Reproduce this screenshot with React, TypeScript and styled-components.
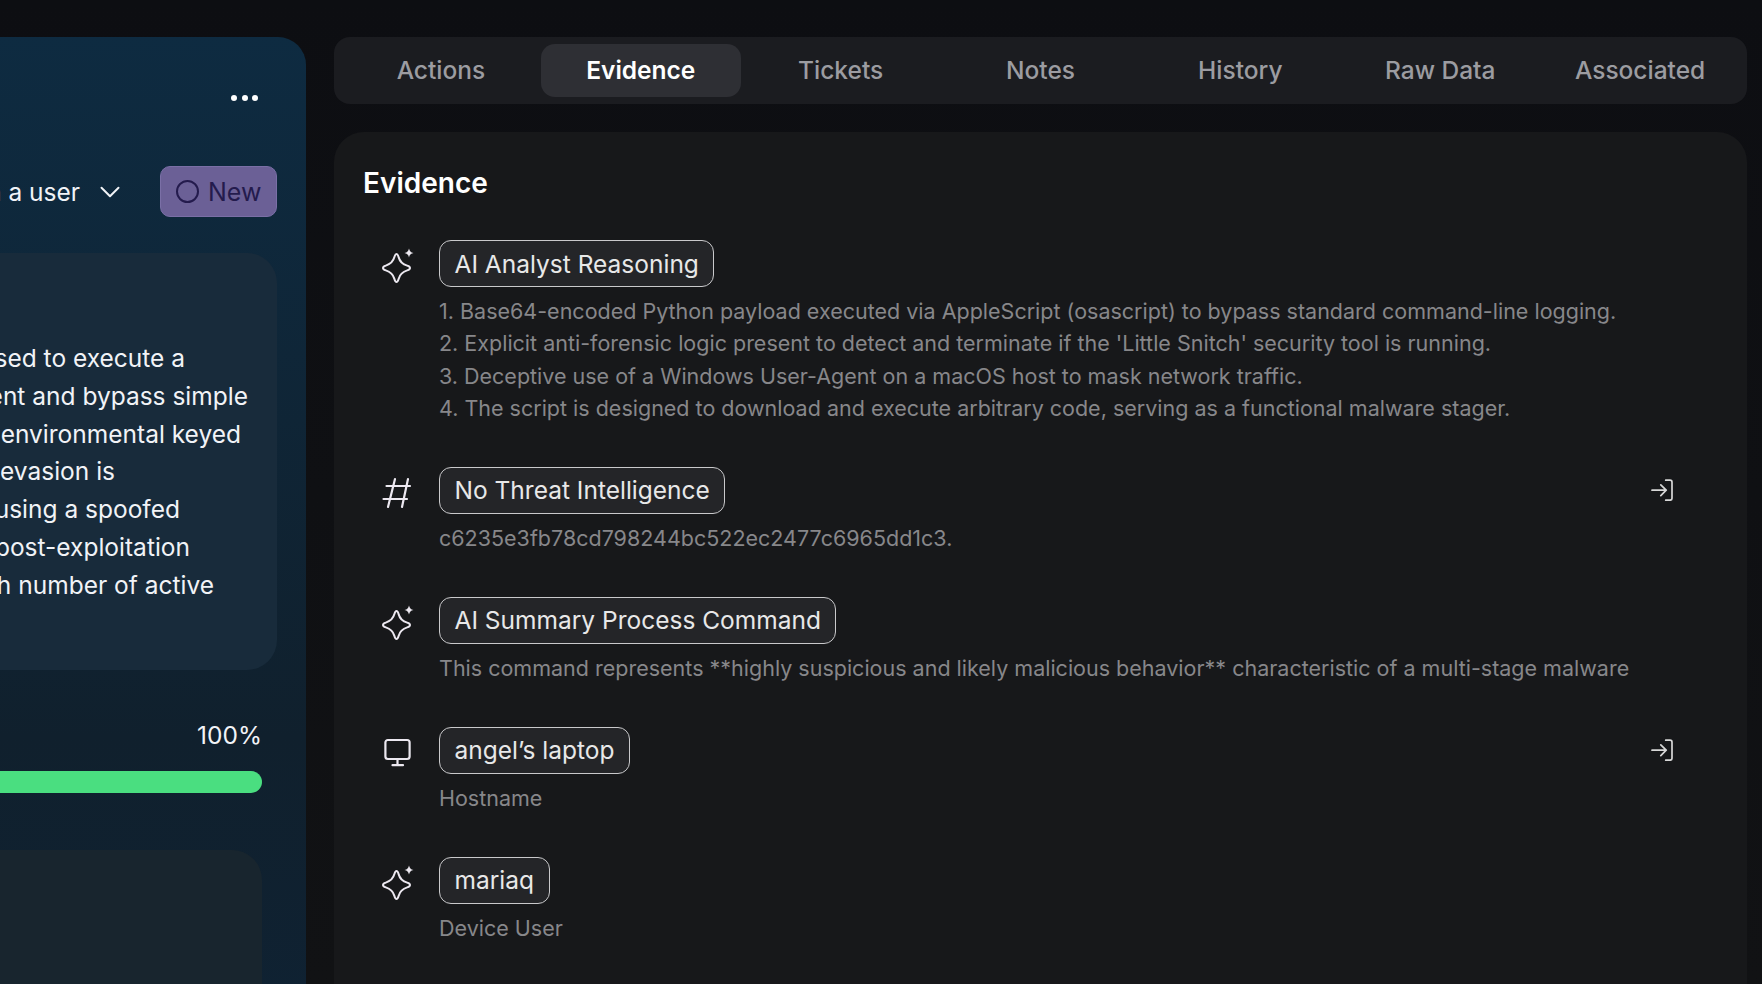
import styled, { createGlobalStyle } from "styled-components";
import { ChevronDown } from "lucide-react";

const GlobalStyle = createGlobalStyle`
  html, body {
    margin: 0;
    height: 984px;
    overflow: hidden;
    background: linear-gradient(180deg, #0d0e12 0%, #111214 100%);
    font-family: Inter, "Liberation Sans", sans-serif;
  }
`;

const summaryLines = [
  { text: "A base64 payload was used to execute a", end: 185 },
  { text: "in memory and avoid content and bypass simple", end: 248 },
  { text: "checks, along with environmental keyed", end: 241 },
  { text: "logic for defense evasion is", end: 115 },
  { text: "the stager beacons using a spoofed", end: 180 },
  { text: "agent to fetch the post-exploitation", end: 190 },
  { text: "across a high number of active", end: 214 },
];

const tabs = ["Actions", "Evidence", "Tickets", "Notes", "History", "Raw Data", "Associated"];

function SparkleIcon() {
  return (
    <Glyph viewBox="0 0 36 36" fill="none" stroke="currentColor" strokeWidth="2" strokeLinejoin="round">
      <path d="M16.5 6c1.200 0 1.600 1.400 2.100 3.100 1.300 4.800 3.500 7 8.600 8.500 1.700.5 2.800 1.200 2.800 2.400s-1.100 1.900-2.800 2.400c-5.100 1.500-7.300 3.700-8.600 8.500-.5 1.700-.9 3.100-2.100 3.100s-1.600-1.400-2.100-3.100c-1.300-4.800-3.500-7-8.600-8.500C4.100 21.900 3 21.200 3 20s1.100-1.900 2.800-2.400c5.100-1.500 7.300-3.700 8.600-8.500.5-1.700.9-3.100 2.100-3.100z" />
      <path
        d="M29 .5c.7 2.800 1.700 3.800 4.500 4.500-2.800.7-3.800 1.700-4.500 4.500-.7-2.800-1.700-3.800-4.500-4.500 2.800-.7 3.800-1.700 4.500-4.500z"
        fill="currentColor"
        stroke="none"
      />
    </Glyph>
  );
}

function HashIcon() {
  return (
    <Glyph viewBox="0 0 36 36" fill="none" stroke="currentColor" strokeWidth="2.200" strokeLinecap="round">
      <path d="M6.500 11h23.500M3.500 24H27M15 4 8 32M28 4 22 32" />
    </Glyph>
  );
}

function MonitorIcon() {
  return (
    <Glyph viewBox="0 0 36 36" fill="none" stroke="currentColor" strokeWidth="2.200" strokeLinecap="round">
      <rect x="5.400" y="5" width="24.200" height="19" rx="2.500" />
      <path d="M17.500 24v6M12.500 30.200h10.500" />
    </Glyph>
  );
}

function JumpIcon() {
  return (
    <JumpGlyph viewBox="0 0 22 22" fill="none" stroke="currentColor" strokeWidth="1.700" strokeLinecap="round" strokeLinejoin="round">
      <path d="M1 11.200h14M9.800 5.800l5.400 5.400-5.400 5.400M14.700 1.200H19a2 2 0 0 1 2 2v16a2 2 0 0 1-2 2h-4.300" />
    </JumpGlyph>
  );
}

function EvidenceRow({ icon, label, children, jump }: { icon: React.ReactNode; label: string; children: React.ReactNode; jump?: boolean }) {
  return (
    <Row>
      <IconSlot>{icon}</IconSlot>
      <RowBody>
        <ChipLine>
          <Chip>{label}</Chip>
          {jump && <JumpIcon />}
        </ChipLine>
        <Detail>{children}</Detail>
      </RowBody>
    </Row>
  );
}

export default function App() {
  return (
    <>
      <GlobalStyle />
      <Page>
        <AlertPanel>
          <MoreDots>
            <i />
            <i />
            <i />
          </MoreDots>
          <StatusRow>
            <Assign>
              <AssignLabel>Assign a user</AssignLabel>
              <ChevronDown size={34} strokeWidth={1.4} />
            </Assign>
            <StatusChip>
              <StatusRing />
              New
            </StatusChip>
          </StatusRow>
          <SummaryCard>
            {summaryLines.map((line) => (
              <SummaryLine key={line.end} $end={line.end}>
                <span>{line.text}</span>
              </SummaryLine>
            ))}
          </SummaryCard>
          <Confidence>
            <ConfidenceValue>100%</ConfidenceValue>
            <ConfidenceBar />
          </Confidence>
          <LowerCard />
        </AlertPanel>
        <Main>
          <TabBar>
            {tabs.map((tab) => (
              <Tab key={tab} $active={tab === "Evidence"}>
                {tab}
              </Tab>
            ))}
          </TabBar>
          <EvidencePanel>
            <Title>Evidence</Title>
            <Rows>
              <EvidenceRow icon={<SparkleIcon />} label="AI Analyst Reasoning">
                1. Base64-encoded Python payload executed via AppleScript (osascript) to bypass standard command-line logging.
                <br />
                2. Explicit anti-forensic logic present to detect and terminate if the 'Little Snitch' security tool is running.
                <br />
                3. Deceptive use of a Windows User-Agent on a macOS host to mask network traffic.
                <br />
                4. The script is designed to download and execute arbitrary code, serving as a functional malware stager.
              </EvidenceRow>
              <EvidenceRow icon={<HashIcon />} label="No Threat Intelligence" jump>
                c6235e3fb78cd798244bc522ec2477c6965dd1c3.
              </EvidenceRow>
              <EvidenceRow icon={<SparkleIcon />} label="AI Summary Process Command">
                This command represents **highly suspicious and likely malicious behavior** characteristic of a multi-stage malware
              </EvidenceRow>
              <EvidenceRow icon={<MonitorIcon />} label="angel’s laptop" jump>
                Hostname
              </EvidenceRow>
              <EvidenceRow icon={<SparkleIcon />} label="mariaq">
                Device User
              </EvidenceRow>
            </Rows>
          </EvidencePanel>
        </Main>
      </Page>
    </>
  );
}

const Page = styled.div`
  display: flex;
  gap: 28px;
  height: 984px;
  padding: 37px 15px 0 0;
  box-sizing: border-box;
  overflow: hidden;
`;

const AlertPanel = styled.aside`
  flex: 0 0 306px;
  display: flex;
  flex-direction: column;
  align-items: flex-end;
  height: 1000px;
  padding: 58px 29px 0 0;
  box-sizing: border-box;
  overflow: hidden;
  border-radius: 0 28px 0 0;
  background: linear-gradient(180deg, #0e2b41 0%, #10202d 70%, #0f2233 100%);
  color: #f1f3f7;
`;

const MoreDots = styled.div`
  flex: none;
  display: flex;
  gap: 4.500px;
  margin-right: 19px;

  i {
    width: 6px;
    height: 6px;
    border-radius: 50%;
    background: #ffffff;
  }
`;

const StatusRow = styled.div`
  flex: none;
  display: flex;
  align-items: center;
  margin-top: 65px;
`;

const Assign = styled.div`
  display: flex;
  align-items: center;
  gap: 12.500px;
  margin-right: 33.500px;
  white-space: nowrap;

  svg {
    flex: none;
  }
`;

const AssignLabel = styled.span`
  font-size: 24.500px;
`;

const StatusChip = styled.div`
  display: flex;
  align-items: center;
  gap: 9px;
  width: 117px;
  height: 51px;
  padding-left: 15px;
  box-sizing: border-box;
  border: 1px solid #7a6fa6;
  border-radius: 10px;
  background: #6b6096;
  color: #241b4d;
  font-size: 25px;
`;

const StatusRing = styled.span`
  width: 23px;
  height: 23px;
  box-sizing: border-box;
  border: 2px solid #241b4d;
  border-radius: 50%;
`;

const SummaryCard = styled.section`
  flex: none;
  align-self: stretch;
  display: flex;
  flex-direction: column;
  height: 417px;
  margin: 36px 0 0 -40px;
  padding: 87px 0 0 40px;
  box-sizing: border-box;
  border-radius: 30px;
  background: #182b3b;
  font-size: 24.500px;
  line-height: 37.800px;
`;

const SummaryLine = styled.div<{ $end: number }>`
  display: flex;
  justify-content: flex-end;
  width: ${({ $end }) => $end}px;
  white-space: nowrap;
`;

const Confidence = styled.div`
  flex: none;
  align-self: stretch;
  display: flex;
  flex-direction: column;
  align-items: flex-end;
  margin: 48px 15px 0 0;
`;

const ConfidenceValue = styled.span`
  font-size: 24.500px;
  line-height: 34px;
`;

const ConfidenceBar = styled.div`
  align-self: stretch;
  height: 22px;
  margin-top: 19px;
  margin-left: -40px;
  border-radius: 11px;
  background: #4ade80;
`;

const LowerCard = styled.section`
  flex: none;
  align-self: stretch;
  height: 300px;
  margin: 57px 15px 0 -40px;
  border-radius: 30px;
  background: #18252e;
`;

const Main = styled.main`
  flex: 1;
  display: flex;
  flex-direction: column;
  gap: 28px;
  min-width: 0;
`;

const TabBar = styled.nav`
  display: grid;
  grid-template-columns: repeat(7, 1fr);
  height: 67px;
  padding: 7px;
  box-sizing: border-box;
  border-radius: 16px;
  background: #1b1c20;
`;

const Tab = styled.div<{ $active?: boolean }>`
  display: flex;
  align-items: center;
  justify-content: center;
  padding-bottom: 2px;
  box-sizing: border-box;
  border-radius: 14px;
  background: ${({ $active }) => ($active ? "#2e2f34" : "transparent")};
  color: ${({ $active }) => ($active ? "#ffffff" : "#9c9ca1")};
  font-size: 24.500px;
  font-weight: ${({ $active }) => ($active ? 600 : 500)};
`;

const EvidencePanel = styled.section`
  flex: 1;
  padding: 32px 58px 0 29px;
  border-radius: 30px 30px 0 0;
  background: #17181a;
`;

const Title = styled.h2`
  margin: 0;
  color: #ffffff;
  font-size: 28px;
  font-weight: 600;
  line-height: 38px;
`;

const Rows = styled.div`
  display: flex;
  flex-direction: column;
  gap: 42.700px;
  margin-top: 38px;
`;

const Row = styled.article`
  display: flex;
  gap: 23px;
  padding-left: 17px;
`;

const IconSlot = styled.div`
  flex: 0 0 36px;
  height: 36px;
  margin-top: 8px;
  color: #ece8f0;
`;

const Glyph = styled.svg`
  display: block;
  width: 36px;
  height: 36px;
`;

const RowBody = styled.div`
  flex: 1;
  display: flex;
  flex-direction: column;
  gap: 8px;
  min-width: 0;
`;

const ChipLine = styled.div`
  display: flex;
  align-items: center;
  justify-content: space-between;
  padding-right: 16px;
`;

const Chip = styled.span`
  display: inline-flex;
  align-items: center;
  height: 47px;
  padding: 0 14.500px;
  box-sizing: border-box;
  border: 1px solid #c9c9cb;
  border-radius: 12px;
  background: #242528;
  color: #e8e8e8;
  font-size: 24.500px;
`;

const JumpGlyph = styled.svg`
  width: 22px;
  height: 22px;
  color: #d8d8d8;
`;

const Detail = styled.p`
  margin: 0;
  color: #87878a;
  font-size: 21.500px;
  line-height: 32.300px;
  white-space: nowrap;
`;
